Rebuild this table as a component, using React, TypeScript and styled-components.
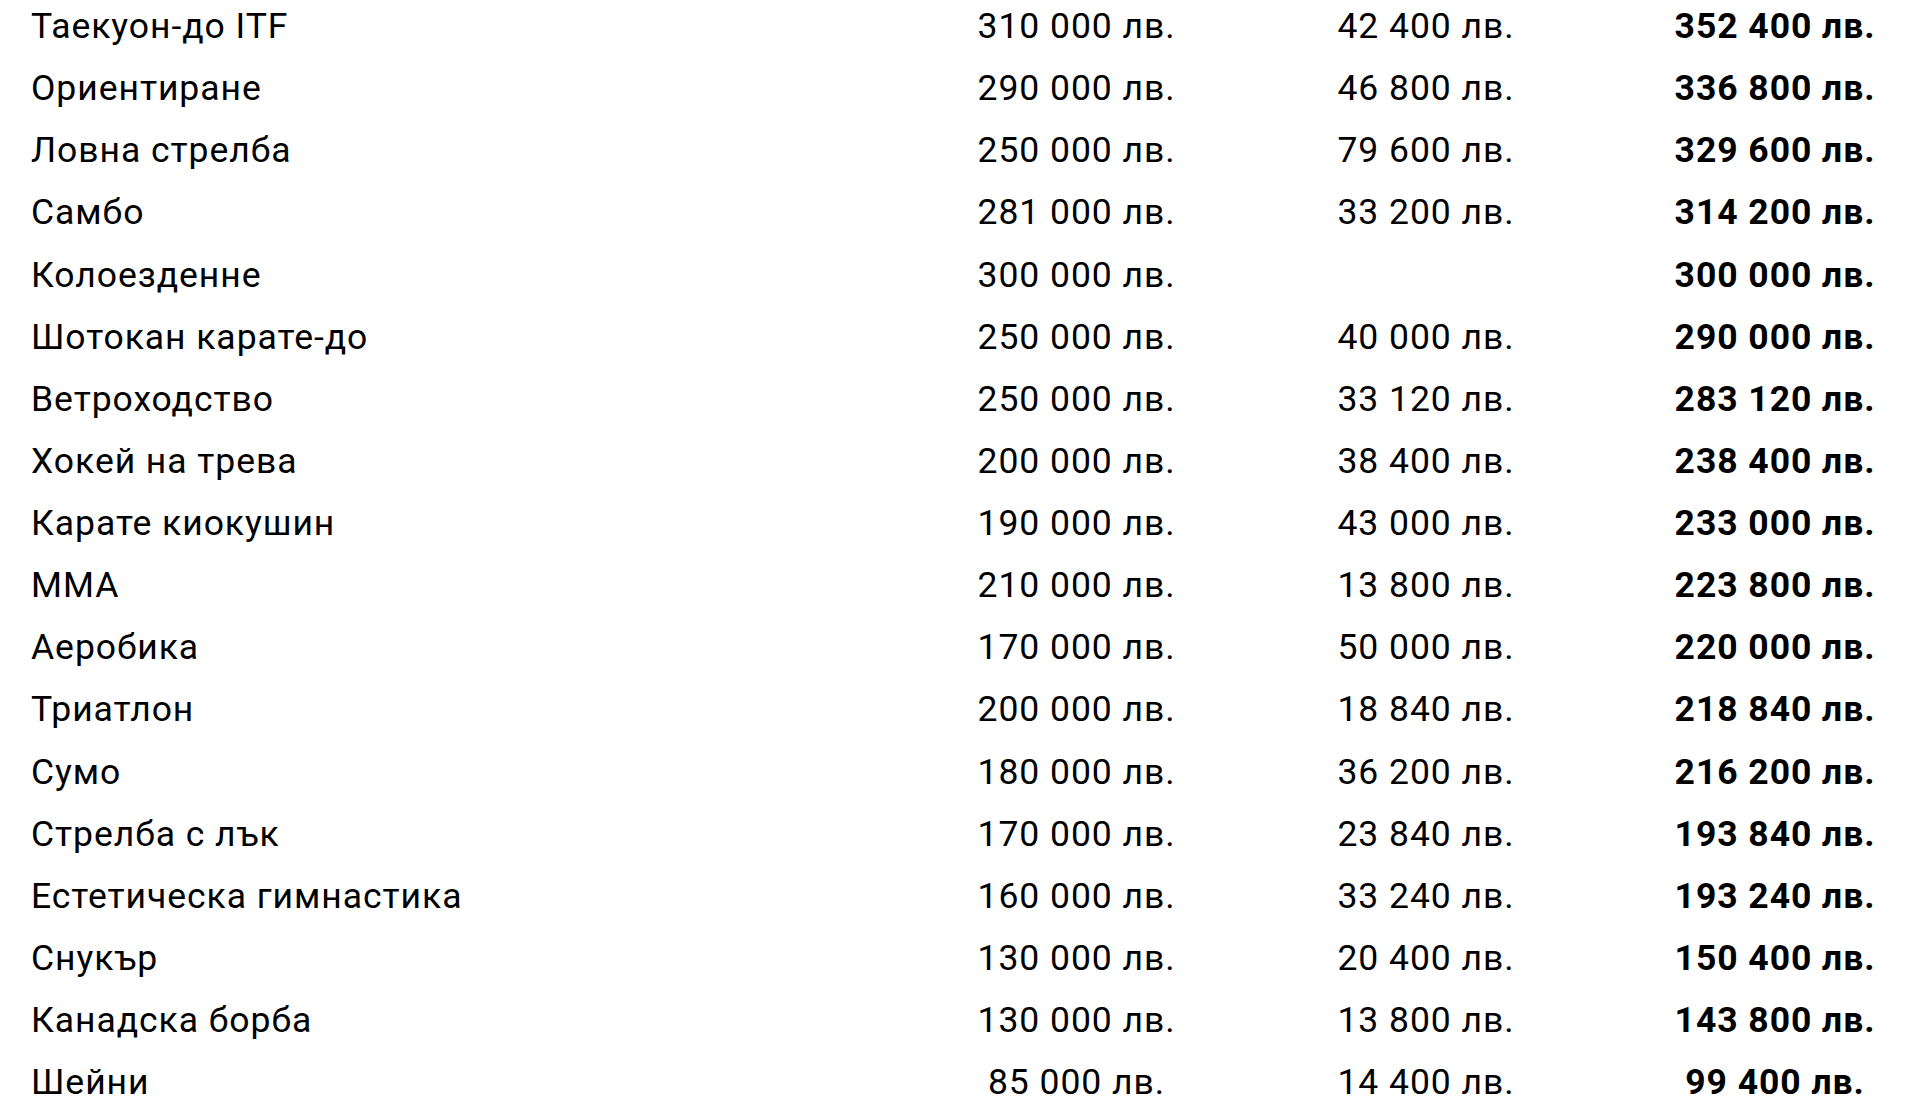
import React from "react";
import styled, { createGlobalStyle } from "styled-components";

const Global = createGlobalStyle`
  html, body {
    margin: 0;
    padding: 0;
    background: #ffffff;
    overflow: hidden;
  }
  body {
    font-family: Roboto, "Noto Sans", "Liberation Sans", sans-serif;
    color: #000;
  }
`;

const Table = styled.div`
  display: flex;
  flex-direction: column;
  padding-left: 31px;
  width: 1920px;
  box-sizing: border-box;
`;

const Row = styled.div`
  display: grid;
  grid-template-columns: 899px 293px 406px 292px;
  height: 62.13px;
  align-items: start;
`;

const Cell = styled.div<{ $align?: "left" | "center"; $bold?: boolean }>`
  font-size: 35.5px;
  line-height: 52px;
  letter-spacing: 0.95px;
  white-space: nowrap;
  text-align: ${(p) => p.$align ?? "left"};
  font-weight: ${(p) => (p.$bold ? 700 : 400)};
  color: #000;
`;

type Item = [string, string, string, string];

const data: Item[] = [
  ["Таекуон-до ITF", "310 000 лв.", "42 400 лв.", "352 400 лв."],
  ["Ориентиране", "290 000 лв.", "46 800 лв.", "336 800 лв."],
  ["Ловна стрелба", "250 000 лв.", "79 600 лв.", "329 600 лв."],
  ["Самбо", "281 000 лв.", "33 200 лв.", "314 200 лв."],
  ["Колоезденне", "300 000 лв.", "", "300 000 лв."],
  ["Шотокан карате-до", "250 000 лв.", "40 000 лв.", "290 000 лв."],
  ["Ветроходство", "250 000 лв.", "33 120 лв.", "283 120 лв."],
  ["Хокей на трева", "200 000 лв.", "38 400 лв.", "238 400 лв."],
  ["Карате киокушин", "190 000 лв.", "43 000 лв.", "233 000 лв."],
  ["ММА", "210 000 лв.", "13 800 лв.", "223 800 лв."],
  ["Аеробика", "170 000 лв.", "50 000 лв.", "220 000 лв."],
  ["Триатлон", "200 000 лв.", "18 840 лв.", "218 840 лв."],
  ["Сумо", "180 000 лв.", "36 200 лв.", "216 200 лв."],
  ["Стрелба с лък", "170 000 лв.", "23 840 лв.", "193 840 лв."],
  ["Естетическа гимнастика", "160 000 лв.", "33 240 лв.", "193 240 лв."],
  ["Снукър", "130 000 лв.", "20 400 лв.", "150 400 лв."],
  ["Канадска борба", "130 000 лв.", "13 800 лв.", "143 800 лв."],
  ["Шейни", "85 000 лв.", "14 400 лв.", "99 400 лв."],
];

export default function App() {
  return (
    <>
      <Global />
      <Table>
        {data.map(([name, a, b, total]) => (
          <Row key={name}>
            <Cell>{name}</Cell>
            <Cell $align="center">{a}</Cell>
            <Cell $align="center">{b}</Cell>
            <Cell $align="center" $bold>
              {total}
            </Cell>
          </Row>
        ))}
      </Table>
    </>
  );
}
